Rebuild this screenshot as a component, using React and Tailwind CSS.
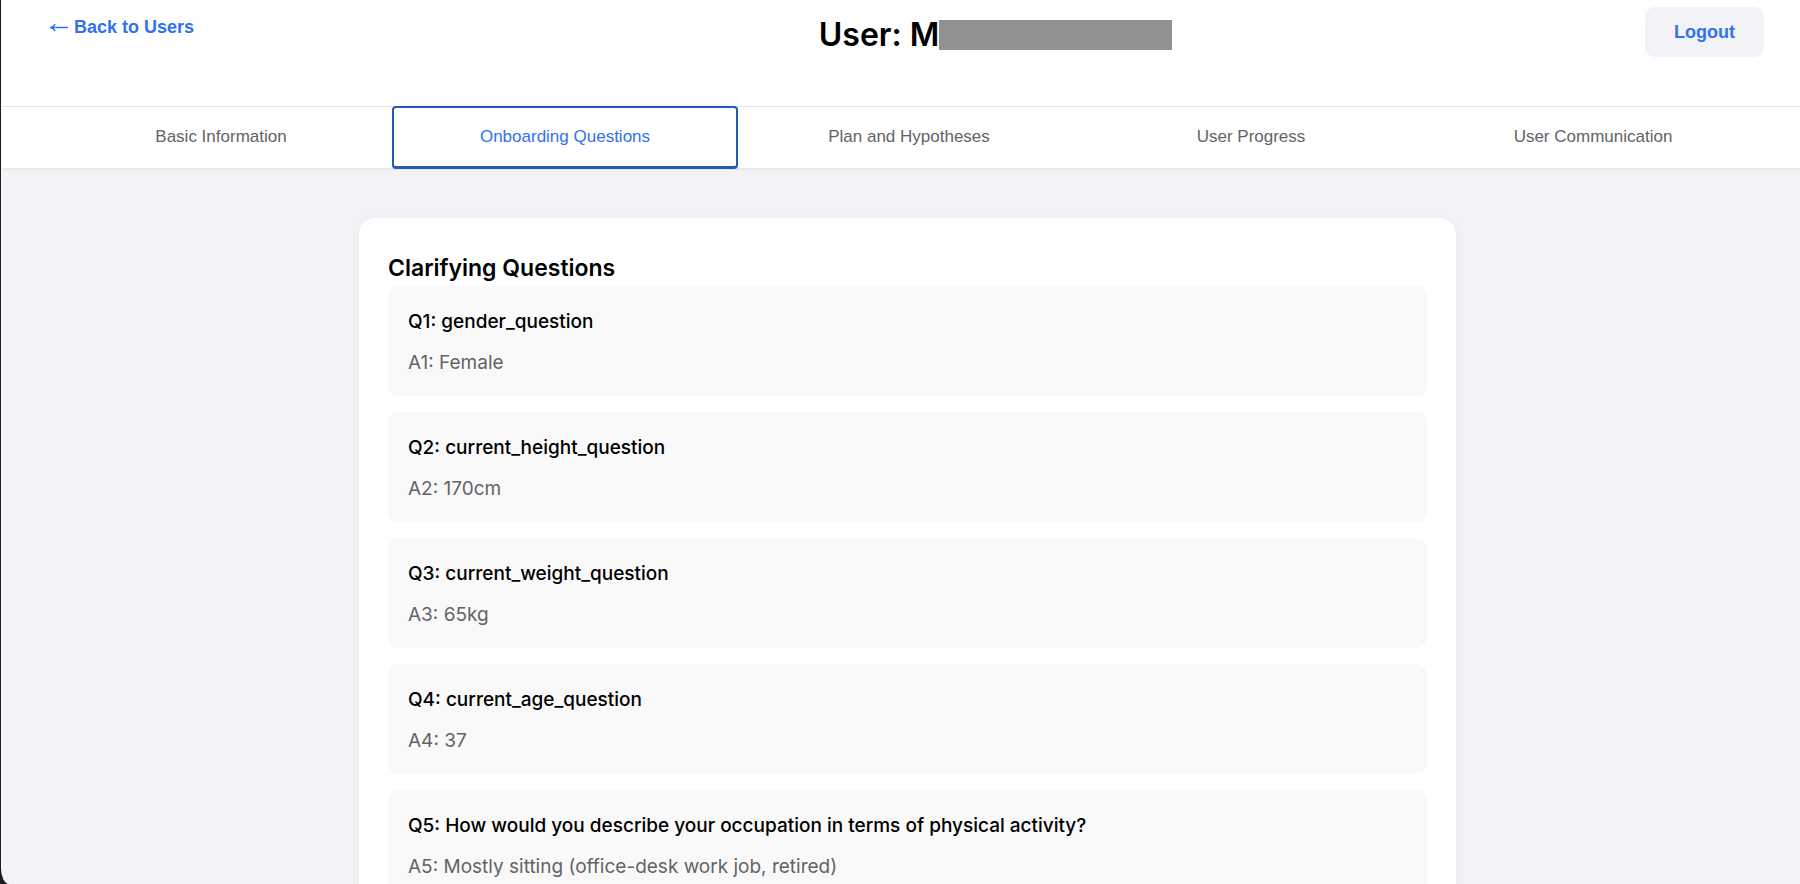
import { useState } from 'react'

const TABS = [
  'Basic Information',
  'Onboarding Questions',
  'Plan and Hypotheses',
  'User Progress',
  'User Communication',
]

const QUESTIONS = [
  { question: 'gender_question', answer: 'Female' },
  { question: 'current_height_question', answer: '170cm' },
  { question: 'current_weight_question', answer: '65kg' },
  { question: 'current_age_question', answer: '37' },
  {
    question: 'How would you describe your occupation in terms of physical activity?',
    answer: 'Mostly sitting (office-desk work job, retired)',
  },
]

function Header() {
  return (
    <header className="flex h-[106px] items-start justify-between bg-white pl-12 pr-9">
      <a
        href="#users"
        className="mt-[15px] flex items-center gap-[5px] font-['Liberation_Sans',sans-serif] text-lg leading-6 font-bold text-[#2f71f0]"
      >
        <svg width="19" height="10" viewBox="0 0 19 10" fill="none" stroke="currentColor" aria-hidden="true">
          <path d="M1.5 5.5H18" strokeWidth="1.5" />
          <path d="M5 2C4.2 3.8 3 4.9 1 5.5C3 6.1 4.2 7.2 5 9" strokeWidth="1.5" />
        </svg>
        Back to Users
      </a>
      <h1 className="mt-3 ml-[152px] flex items-center text-[32px] leading-[46px] font-semibold text-black">
        User: M
        <span className="h-[30px] w-[233px] bg-[#929292]" />
      </h1>
      <button
        type="button"
        className="mt-[7px] h-[50px] rounded-[10px] bg-[#f2f2f7] px-[29px] font-['Liberation_Sans',sans-serif] text-lg font-bold text-[#2f71f0]"
      >
        Logout
      </button>
    </header>
  )
}

function TabBar({ selected, onSelect }) {
  return (
    <nav className="flex h-[64px] border-t border-b-2 border-t-[#e3e3e5] border-b-[#e9e9ea] bg-white pl-12 pr-9 font-['Liberation_Sans',sans-serif]">
      {TABS.map((tab) => (
        <button
          key={tab}
          type="button"
          onClick={() => onSelect(tab)}
          className={`-my-px flex-1 text-[17px] ${
            selected === tab
              ? 'rounded border-2 border-b-3 border-[#2459bb] text-[#2f71f0]'
              : 'pb-0.5 text-[#636366]'
          }`}
        >
          {tab}
        </button>
      ))}
    </nav>
  )
}

function QuestionCard({ number, question, answer }) {
  return (
    <li className="rounded-[10px] bg-[#f9f9f9] p-5 pt-[23px] text-[19px]">
      <p className="leading-[26px] font-medium text-black">
        Q{number}: {question}
      </p>
      <p className="mt-[15px] leading-[26px] text-[#636366]">
        A{number}: {answer}
      </p>
    </li>
  )
}

export default function App() {
  const [tab, setTab] = useState('Onboarding Questions')

  return (
    <div className="h-screen bg-[#1c1c1e] pl-px font-[Inter,sans-serif]">
      <div className="h-full overflow-hidden rounded-bl-[8px_16px] border-l border-[#fbf9fb] bg-[#f2f2f7]">
        <Header />
        <TabBar selected={tab} onSelect={setTab} />
        <main className="pt-12 pr-[35px] pl-12">
          <section className="mx-auto max-w-[1097px] rounded-2xl bg-white px-[29px] pt-8 pb-8 shadow-[0_2px_10px_rgba(0,0,0,0.05)]">
            <h2 className="text-[23px] leading-9 font-semibold text-black">Clarifying Questions</h2>
            <ul className="flex flex-col gap-4">
              {QUESTIONS.map((item, i) => (
                <QuestionCard key={item.question} number={i + 1} {...item} />
              ))}
            </ul>
          </section>
        </main>
      </div>
    </div>
  )
}
